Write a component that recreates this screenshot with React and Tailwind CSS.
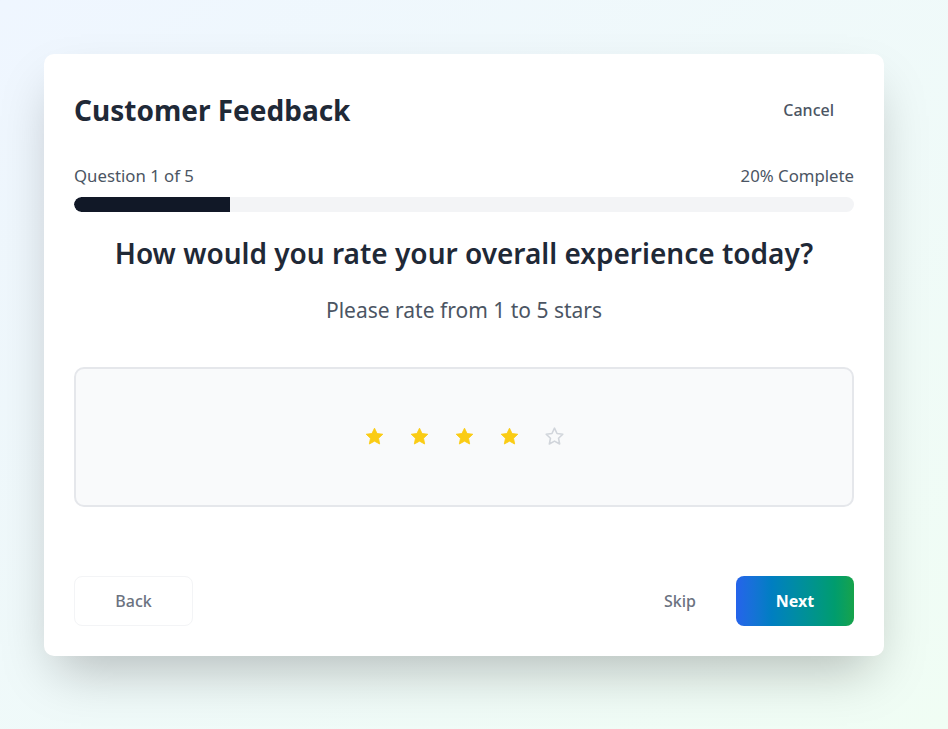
import { useState } from "react";

const font = { fontFamily: '"Noto Sans", "Open Sans", sans-serif' };

function Star({ filled }) {
  return (
    <svg width="21" height="21" viewBox="0 0 24 24" aria-hidden="true">
      <path
        d="M12 2.5l2.9 6.1 6.6.8-4.9 4.6 1.3 6.6L12 17.3l-5.9 3.3 1.3-6.6-4.9-4.6 6.6-.8z"
        fill={filled ? "#facc15" : "none"}
        stroke={filled ? "#facc15" : "#d1d5db"}
        strokeWidth={filled ? 1 : 1.8}
        strokeLinejoin="round"
      />
    </svg>
  );
}

export default function App() {
  const [rating, setRating] = useState(4);
  const step = 1;
  const total = 5;
  const pct = (step / total) * 100;

  return (
    <div
      className="min-h-[729px] w-full bg-gradient-to-br from-[#eff6ff] to-[#f0fdf4] pt-[54px] pl-[44px]"
      style={font}
    >
      <div className="w-[840px] h-[602px] bg-white rounded-[10px] shadow-[0_25px_50px_-12px_rgba(0,0,0,0.25)] px-[30px] pt-[30px] flex flex-col">
        {/* Header */}
        <div className="flex items-center justify-between h-[52px]">
          <h1 className="text-[28px] font-bold text-[#1f2937] leading-none">Customer Feedback</h1>
          <button className="px-5 py-2 text-[16px] font-medium text-[#4b5563]">Cancel</button>
        </div>

        {/* Progress */}
        <div className="mt-[32px] flex justify-between text-[16.75px] text-[#4b5563] leading-none">
          <span>Question {step} of {total}</span>
          <span>{pct}% Complete</span>
        </div>
        <div className="mt-[12px] h-[15px] w-full rounded-full bg-[#f3f4f6] overflow-hidden">
          <div className="h-full bg-[#111827] rounded-l-full" style={{ width: `${pct}%` }} />
        </div>

        {/* Question */}
        <h2 className="mt-[23px] text-center text-[28px] font-semibold text-[#1f2937] leading-[36px]">
          How would you rate your overall experience today?
        </h2>
        <p className="mt-[25px] text-center text-[21px] text-[#4b5563] leading-[28px]">
          Please rate from 1 to 5 stars
        </p>

        {/* Rating box */}
        <div className="mt-[43px] h-[140px] border-2 border-[#e5e7eb] bg-[#f9fafb] rounded-[10px] flex items-center justify-center gap-[24px]">
          {[1, 2, 3, 4, 5].map((n) => (
            <button key={n} onClick={() => setRating(n)} className="p-0">
              <Star filled={n <= rating} />
            </button>
          ))}
        </div>

        {/* Footer */}
        <div className="mt-[69px] flex items-center justify-between">
          <button className="w-[119px] h-[50px] border border-[#f3f4f6] rounded-[8px] text-[16px] font-medium text-[#6b7280]">
            Back
          </button>
          <div className="flex items-center gap-[20px]">
            <button className="px-5 h-[50px] text-[16px] font-medium text-[#6b7280]">Skip</button>
            <button className="w-[118px] h-[50px] rounded-[8px] bg-gradient-to-r from-[#2563eb] to-[#16a34a] text-white text-[16px] font-bold">
              Next
            </button>
          </div>
        </div>
      </div>
    </div>
  );
}
